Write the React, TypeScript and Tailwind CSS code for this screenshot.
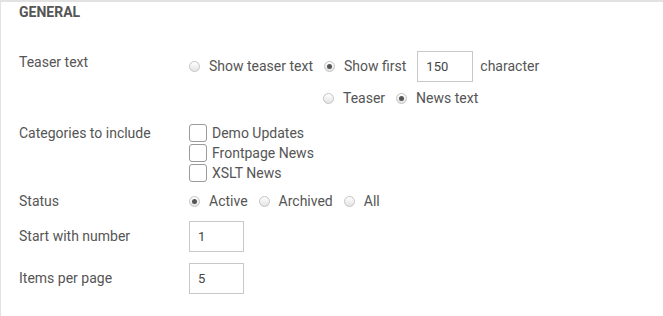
import React from 'react';

interface RadioProps {
  label: string;
  checked?: boolean;
}

function Radio({ label, checked }: RadioProps) {
  return (
    <label className="flex items-center mr-[11px]">
      <span className="w-[11px] h-[11px] rounded-full border border-[#c4c4c4] bg-gradient-to-b from-[#ffffff] to-[#e3e3e3] flex items-center justify-center mr-[9px] shrink-0">
        {checked && <span className="w-[5px] h-[5px] rounded-full bg-[#555]" />}
      </span>
      <span>{label}</span>
    </label>
  );
}

function Checkbox({ label }: { label: string }) {
  return (
    <label className="flex items-center h-5">
      <span className="w-[18px] h-[18px] rounded-[3px] border border-[#9a9a9a] bg-white mr-[5px] shrink-0" />
      <span>{label}</span>
    </label>
  );
}

function NumberBox({ value, width }: { value: string; width: string }) {
  return (
    <input
      type="text"
      defaultValue={value}
      className={`${width} h-[31px] border border-[#c8c8c8] px-[8px] text-[13px] text-[#444] outline-none bg-white`}
    />
  );
}

export default function App() {
  return (
    <div
      className="w-[663px] h-[316px] bg-white border-t-2 border-l border-[#e2e2e2] text-[14px] text-[#555] overflow-hidden"
      style={{ fontFamily: 'Roboto, "Liberation Sans", sans-serif' }}
    >
      <div className="pl-[18px] pt-[2px]">
        <h3 className="text-[14px] leading-4 font-bold text-[#555]">GENERAL</h3>

        {/* Teaser text */}
        <div className="flex mt-[31px]">
          <div className="w-[170px] shrink-0 leading-5 pt-[1px]">Teaser text</div>
          <div>
            <div className="flex items-center h-[31px]">
              <Radio label="Show teaser text" />
              <Radio label="Show first" checked />
              <NumberBox value="150" width="w-[56px]" />
              <span className="ml-[7px]">character</span>
            </div>
            <div className="flex items-center h-5 mt-[6px] pl-[134px]">
              <Radio label="Teaser" />
              <Radio label="News text" checked />
            </div>
          </div>
        </div>

        {/* Categories */}
        <div className="flex mt-[15px]">
          <div className="w-[170px] shrink-0 leading-5">Categories to include</div>
          <div>
            <Checkbox label="Demo Updates" />
            <Checkbox label="Frontpage News" />
            <Checkbox label="XSLT News" />
          </div>
        </div>

        {/* Status */}
        <div className="flex items-center h-5 mt-[8px]">
          <div className="w-[170px] shrink-0">Status</div>
          <div className="flex items-center">
            <Radio label="Active" checked />
            <Radio label="Archived" />
            <Radio label="All" />
          </div>
        </div>

        <div className="flex items-center mt-[10px]">
          <div className="w-[170px] shrink-0">Start with number</div>
          <NumberBox value="1" width="w-[55px]" />
        </div>

        <div className="flex items-center mt-[11px]">
          <div className="w-[170px] shrink-0">Items per page</div>
          <NumberBox value="5" width="w-[55px]" />
        </div>
      </div>
    </div>
  );
}
